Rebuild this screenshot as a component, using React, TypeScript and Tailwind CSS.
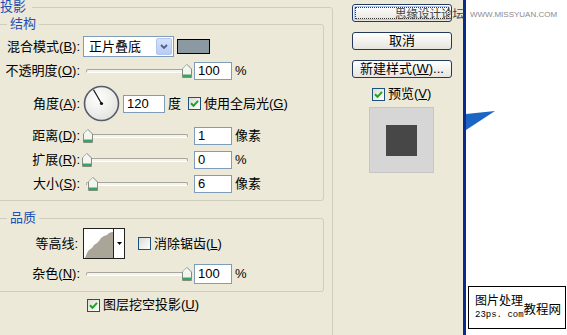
import React from "react";

const FONT = "font-['Liberation_Sans','Noto_Sans_CJK_SC',sans-serif]";

function Thumb() {
  return (
    <svg width="10" height="14" viewBox="0 0 10 14">
      <path d="M5 0.5 L9.5 5 V13.5 H0.5 V5 Z" fill="#f5f5f0" stroke="#7f8f86" />
      <path d="M1 10.5 H9 V13 H1 Z" fill="#3aa55a" />
      <path d="M1.2 5.2 L5 1.4" stroke="#ffffff" />
    </svg>
  );
}

function Slider({ pos }: { pos: number }) {
  return (
    <div className="relative ml-[3px] h-[14px] w-[109px]">
      <div className="absolute left-[3px] right-[4px] top-[5px] h-[4px] rounded-full border border-[#a6a59b] border-b-white bg-[#f4f3ee]" />
      <div className="absolute top-0" style={{ left: pos }}>
        <Thumb />
      </div>
    </div>
  );
}

function Field({ value, className = "" }: { value: string; className?: string }) {
  return (
    <div className={`flex h-[18px] w-[38px] items-center border border-[#7f9db9] bg-white pl-[3px] ${className}`}>
      {value}
    </div>
  );
}

function Check({ checked }: { checked?: boolean }) {
  return (
    <span className="flex h-[13px] w-[13px] shrink-0 items-center justify-center border border-[#1c5180] bg-linear-to-br from-[#dcdcd5] to-white">
      {checked && (
        <svg width="9" height="9" viewBox="0 0 9 9">
          <path d="M1 4.2 L3.5 6.8 L8 1.8" fill="none" stroke="#21a121" strokeWidth="2" />
        </svg>
      )}
    </span>
  );
}

function Dial() {
  return (
    <svg width="37" height="37" viewBox="0 0 37 37" className="ml-[3px]">
      <defs>
        <radialGradient id="dialFill" cx="40%" cy="35%" r="70%">
          <stop offset="0%" stopColor="#ffffff" />
          <stop offset="100%" stopColor="#e2e2dc" />
        </radialGradient>
      </defs>
      <circle cx="18.5" cy="18.5" r="17" fill="url(#dialFill)" stroke="#565a6c" strokeWidth="1.6" />
      <line x1="18.5" y1="18.5" x2="10.5" y2="4.8" stroke="#111" strokeWidth="1.2" />
      <circle cx="18.5" cy="18.5" r="1.6" fill="#111" />
    </svg>
  );
}

function Contour() {
  return (
    <div className="ml-[5px] flex h-[31px] w-[42px] border border-[#222] bg-white">
      <svg width="29" height="29" viewBox="0 0 29 29">
        <path
          d="M1 29 L3 24 L5 21 L8 19 L10 16 L13 14 L15 12 L17 9 L20 7 L23 6 L25 4 L28 3 L29 3 V29 Z"
          fill="#a9a597"
        />
      </svg>
      <div className="flex flex-1 items-center justify-center border-l border-[#222]">
        <svg width="5" height="3" viewBox="0 0 5 3">
          <path d="M0 0 H5 L2.5 3 Z" fill="#000" />
        </svg>
      </div>
    </div>
  );
}

function Btn({ children, isDefault, className = "" }: { children?: React.ReactNode; isDefault?: boolean; className?: string }) {
  return (
    <div
      className={`relative flex h-[18px] w-[100px] items-center justify-center rounded-[3px] border border-[#24395e] bg-linear-to-b from-white to-[#e6e5de] ${className}`}
    >
      {isDefault && (
        <span className="absolute inset-[2px] rounded-[1px] border border-dotted border-[#333] shadow-[0_0_0_1px_#b4c8ee]" />
      )}
      {children && <span>{children}</span>}
    </div>
  );
}

export default function App() {
  return (
    <div className={`relative flex h-[335px] w-[567px] overflow-hidden bg-[#ece9d8] text-[13px] leading-[14px] text-black ${FONT}`}>
      {/* Left: 投影 */}
      <div className="w-[340px] shrink-0">
        <fieldset className="ml-[-6px] w-[339px] rounded-[3px] border border-[#cfcdbc] pb-[40px] pl-[2px] pr-[8px]">
          <legend className="ml-[3px] pr-[6px] text-[#1c4fb5]">投影</legend>

          <fieldset className="mt-[3px] rounded-[3px] border border-[#cfcdbc] pb-[4px] pl-[2px]">
            <legend className="ml-[7px] px-[3px] text-[#1c4fb5]">结构</legend>

            <div className="mt-[4px] flex h-[23px] items-center">
              <span className="w-[80px] text-right">混合模式(<u>B</u>):</span>
              <div className="ml-[3px] flex h-[21px] w-[91px] items-center border border-[#7f9db9] bg-white pl-[5px]">
                <span className="flex-1">正片叠底</span>
                <span className="mr-[1px] flex h-[17px] w-[16px] items-center justify-center rounded-[2px] border border-[#b3c6f0] bg-linear-to-b from-[#d6e2fb] to-[#b7cbf5]">
                  <svg width="8" height="5" viewBox="0 0 8 5">
                    <path d="M1 1 L4 4 L7 1" fill="none" stroke="#4d6185" strokeWidth="1.8" />
                  </svg>
                </span>
              </div>
              <div className="ml-[3px] h-[15px] w-[33px] border border-black bg-[#8b9aa2]" />
            </div>

            <div className="flex h-[26px] items-center">
              <span className="w-[80px] text-right">不透明度(<u>O</u>):</span>
              <Slider pos={99} />
              <Field value="100" className="ml-[2px] h-[17px]" />
              <span className="ml-[3px]">%</span>
            </div>

            <div className="flex h-[39px] items-center">
              <span className="w-[80px] text-right">角度(<u>A</u>):</span>
              <Dial />
              <Field value="120" className="ml-[3px] h-[17px] w-[42px]" />
              <span className="ml-[3px]">度</span>
              <span className="ml-[7px]">
                <Check checked />
              </span>
              <span className="ml-[3px]">使用全局光(<u>G</u>)</span>
            </div>

            <div className="flex h-[26px] items-center">
              <span className="w-[80px] text-right">距离(<u>D</u>):</span>
              <Slider pos={0} />
              <Field value="1" className="ml-[2px]" />
              <span className="ml-[3px]">像素</span>
            </div>

            <div className="flex h-[22px] items-center">
              <span className="w-[80px] text-right">扩展(<u>R</u>):</span>
              <Slider pos={-1} />
              <Field value="0" className="ml-[2px]" />
              <span className="ml-[3px]">%</span>
            </div>

            <div className="flex h-[25px] items-center">
              <span className="w-[80px] text-right">大小(<u>S</u>):</span>
              <Slider pos={5} />
              <Field value="6" className="ml-[2px]" />
              <span className="ml-[3px]">像素</span>
            </div>
          </fieldset>

          <fieldset className="mt-[10px] rounded-[3px] border border-[#cfcdbc] pb-[2px] pl-[2px]">
            <legend className="ml-[7px] px-[3px] text-[#1c4fb5]">品质</legend>

            <div className="mt-[3px] flex h-[31px] items-center">
              <span className="w-[78px] text-right">等高线:</span>
              <Contour />
              <span className="ml-[13px]">
                <Check />
              </span>
              <span className="ml-[3px]">消除锯齿(<u>L</u>)</span>
            </div>

            <div className="flex h-[30px] items-center">
              <span className="w-[80px] text-right">杂色(<u>N</u>):</span>
              <Slider pos={99} />
              <Field value="100" className="ml-[2px] h-[20px]" />
              <span className="ml-[3px]">%</span>
            </div>
          </fieldset>

          <div className="ml-[90px] mt-[6px] flex items-center gap-[3px]">
            <Check checked />
            <span>图层挖空投影(<u>U</u>)</span>
          </div>
        </fieldset>
      </div>

      {/* Right: buttons + preview */}
      <div className="flex w-[123px] shrink-0 flex-col items-start pl-[12px] pt-[4px]">
        {/* 好 button: its label is hidden under the watermark */}
        <Btn isDefault />
        <Btn className="mt-[10px]">取消</Btn>
        <Btn className="mt-[10px]">
          新建样式(<u>W</u>)...
        </Btn>
        <div className="ml-[20px] mt-[9px] flex items-center gap-[3px]">
          <Check checked />
          <span>预览(<u>V</u>)</span>
        </div>
        <div className="ml-[17px] mt-[6px] flex h-[66px] w-[65px] items-center justify-center border border-[#c6c6c6] bg-[#d6d6d6]">
          <div className="h-[31px] w-[31px] bg-[#474747]" />
        </div>
      </div>

      <div className="w-[3px] shrink-0 bg-[#0b2c8c]" />

      {/* Right white area */}
      <div className="flex flex-1 flex-col bg-white">
        <svg width="30" height="20" viewBox="0 0 30 20" className="mt-[111px]">
          <path d="M0 3 L29 0 L0 19 Z" fill="#1b66c4" />
        </svg>
        <div className="mb-[6px] ml-[2px] mt-auto flex h-[43px] w-[98px] items-start border border-black bg-white pl-[6px] pt-[8px]">
          <div className="flex flex-col">
            <span className="text-[12px] leading-[13px]">图片处理</span>
            <span className="mt-[2px] font-['Liberation_Mono',monospace] text-[9px] leading-[10px]">23ps. com</span>
          </div>
          <span className="mt-[7px] text-[12.5px] leading-[16px]">教程网</span>
        </div>
      </div>

      {/* watermark */}
      <div className="absolute left-[395px] top-[8px] flex items-center whitespace-nowrap">
        <span className="text-[11.5px] leading-[13px] text-[#444]">思缘设计论坛</span>
        <span className="ml-[6px] text-[8px] leading-[10px] text-[#8a8a8a]">WWW.MISSYUAN.COM</span>
      </div>
    </div>
  );
}
